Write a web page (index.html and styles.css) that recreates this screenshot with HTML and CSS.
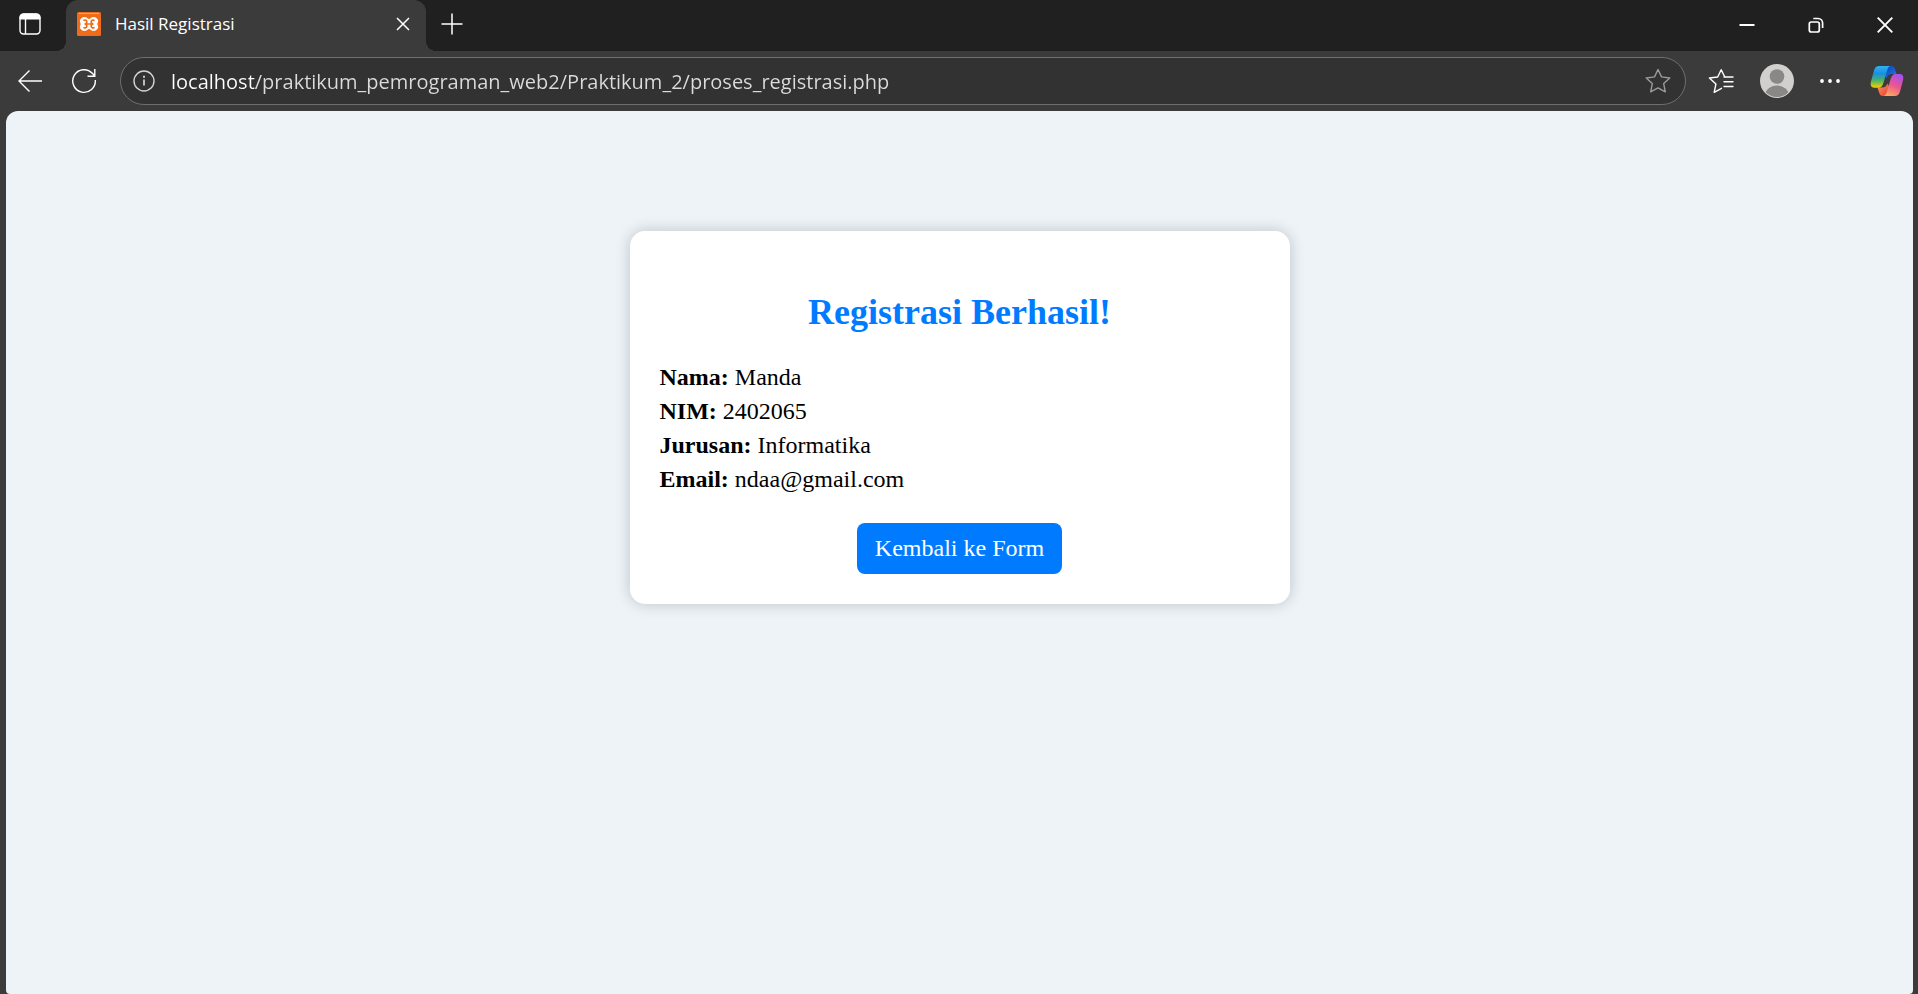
FILE: index.html
```html
<!DOCTYPE html>
<html lang="id">
<head>
<meta charset="utf-8">
<title>Hasil Registrasi</title>
<link rel="stylesheet" href="styles.css">
</head>
<body>
<div class="window">
  <header class="titlebar">
    <button class="tab-actions" type="button" aria-label="Tab actions">
      <svg width="24" height="24" viewBox="0 0 24 24" fill="none" stroke="#fff"><rect x="2" y="2" width="20" height="20" rx="3.5" stroke-width="1.4"/><path d="M2 7V5.5A3.5 3.5 0 0 1 5.500 2h13A3.500 3.500 0 0 1 22 5.500V7z" fill="#fff"/><path d="M7.500 7v15" stroke-width="1.400"/></svg>
    </button>
    <div class="tab">
      <svg class="favicon" width="24" height="24" viewBox="0 0 24 24"><rect width="24" height="24" rx="1.500" fill="#ef6c1a"/><path d="M2 1.500h20" stroke="#f7a56a" stroke-width="1"/><path d="M7.500 5.500c2.500 0 2.900 2 4.500 2s2-2 4.500-2c2.500 0 4.200 1.700 4.200 3.500 0 1.400-.9 2-.9 3s.9 1.600.9 3c0 1.800-1.700 3.500-4.200 3.500s-2.900-2-4.500-2-2 2-4.500 2c-2.500 0-4.200-1.700-4.200-3.500 0-1.400.9-2 .9-3s-.9-1.600-.9-3c0-1.800 1.700-3.500 4.200-3.500z" fill="#fff" stroke="#fff" stroke-width="1"/><path d="M6.500 8.700c1.200-1.100 3.200-.6 3.300 1 .1 1.400-.8 2.300-2.300 2.300 1.500 0 2.400.9 2.300 2.300-.1 1.600-2.100 2.100-3.300 1M17.500 8.700c-1.200-1.100-3.200-.6-3.300 1-.1 1.400.8 2.300 2.300 2.300-1.500 0-2.400.9-2.300 2.300.1 1.600 2.100 2.100 3.300 1M9.500 12h5" fill="none" stroke="#ef6c1a" stroke-width="1.700"/></svg>
      <span class="tab-title">Hasil Registrasi</span>
      <button type="button" class="tab-close" aria-label="Close tab">
        <svg width="14" height="14" viewBox="0 0 14 14" fill="none" stroke="#fff" stroke-width="1.500"><path d="M1 1l12 12M13 1L1 13"/></svg>
      </button>
    </div>
    <button type="button" class="new-tab" aria-label="New tab">
      <svg width="22" height="22" viewBox="0 0 22 22" fill="none" stroke="#fff" stroke-width="1.500"><path d="M11 .5v21M.5 11h21"/></svg>
    </button>
    <div class="window-controls">
      <button type="button" aria-label="Minimize"><svg width="16" height="16" viewBox="0 0 16 16" stroke="#fff" stroke-width="2"><path d="M.5 8h15"/></svg></button>
      <button type="button" aria-label="Restore"><svg width="16" height="16" viewBox="0 0 16 16" fill="none" stroke="#fff" stroke-width="1.700"><rect x="1.300" y="5" width="10" height="10" rx="2"/><path d="M5.300 1.500H10a4.600 4.600 0 0 1 4.600 4.600v5"/></svg></button>
      <button type="button" aria-label="Close"><svg width="16" height="16" viewBox="0 0 16 16" stroke="#fff" stroke-width="1.900"><path d="M.7.7l14.600 14.600M15.300.7L.7 15.300"/></svg></button>
    </div>
  </header>

  <nav class="toolbar">
    <button type="button" aria-label="Back"><svg width="24" height="24" viewBox="0 0 24 24" fill="none" stroke="#fff" stroke-width="1.400"><path d="M11.500 1.500L1 12l10.500 10.500M1 12h23"/></svg></button>
    <button type="button" aria-label="Refresh"><svg width="26" height="26" viewBox="0 0 26 26" fill="none" stroke="#fff" stroke-width="1.400"><path d="M24.300 12A11.300 11.300 0 1 1 21.300 5.300L23.800 8M23.800 1v7.300h-7.300"/></svg></button>
    <div class="address">
      <svg width="22" height="22" viewBox="0 0 22 22" fill="none" stroke="#d4d4d4" stroke-width="1.400"><circle cx="11" cy="11" r="10"/><path d="M11 9.500v6" stroke-width="1.700"/><path d="M11 5.700v2" stroke-width="1.900"/></svg>
      <input class="url" type="text" aria-label="Address" value="localhost/praktikum_pemrograman_web2/Praktikum_2/proses_registrasi.php">
      <button type="button" aria-label="Add to favorites"><svg width="26" height="26" viewBox="0 0 26 26" fill="none" stroke="#9b9b9b" stroke-width="1.400" stroke-linejoin="round"><path d="M13 1.500l3.500 7.400 8.300 1.100-6.100 5.600 1.600 8.200L13 19.900l-7.300 3.900 1.600-8.200L1.200 10l8.300-1.100z"/></svg></button>
    </div>
    <div class="tools">
      <button type="button" aria-label="Favorites"><svg width="26" height="26" viewBox="0 0 26 26" fill="none" stroke="#fff" stroke-width="1.400" stroke-linejoin="round" stroke-linecap="round"><path d="M13.500 20.300L6.200 24.300l1.700-8.300-6.500-6 8.300-1 3.500-7.300L16.800 9H18M16 9h9M16 13.700h9M16 18.500h9"/></svg></button>
      <button type="button" aria-label="Profile"><svg width="34" height="34" viewBox="0 0 34 34"><clipPath id="avatar"><circle cx="17" cy="17" r="16"/></clipPath><circle cx="17" cy="17" r="17" fill="#d2d0ce"/><g fill="#8a8886" clip-path="url(#avatar)"><circle cx="17" cy="12.500" r="7.300"/><ellipse cx="17" cy="32" rx="12" ry="10.500"/></g></svg></button>
      <button type="button" aria-label="Settings and more"><svg width="20" height="4" viewBox="0 0 20 4" fill="#fff"><circle cx="2" cy="2" r="1.900"/><circle cx="10" cy="2" r="1.900"/><circle cx="18" cy="2" r="1.900"/></svg></button>
      <button type="button" aria-label="Copilot"><svg width="34" height="32" viewBox="0 0 34 32">
        <defs>
          <linearGradient id="cool" x1="0" y1="0" x2="0" y2="1"><stop offset="0" stop-color="#2db4f5"/><stop offset=".35" stop-color="#1a8fe0"/><stop offset=".65" stop-color="#45b26b"/><stop offset="1" stop-color="#f6d000"/></linearGradient>
          <linearGradient id="blue" x1="0" y1="0" x2="1" y2="1"><stop offset="0" stop-color="#1138b5"/><stop offset="1" stop-color="#1c86f2"/></linearGradient>
          <linearGradient id="warm" x1=".7" y1="0" x2=".3" y2="1"><stop offset="0" stop-color="#a650ee"/><stop offset=".5" stop-color="#ec5590"/><stop offset="1" stop-color="#ffa95c"/></linearGradient>
          <linearGradient id="red" x1="0" y1="0" x2="1" y2="1"><stop offset="0" stop-color="#ff9a55"/><stop offset="1" stop-color="#e8383d"/></linearGradient>
        </defs>
        <path d="M17 1h4c2.500 0 3.400 1.600 4 3.700L26.500 9H22c-3 0-4.500 1.500-5.300 4L15 11z" fill="url(#blue)"/>
        <path d="M17 31h-4c-2.500 0-3.400-1.600-4-3.700L7.500 22.500H12c3 0 4.500-1.500 5.300-4L19 21z" fill="url(#red)"/>
        <path d="M9.500 1H21c-2 0-3 1.600-3.600 3.500l-4 13.500c-.9 3-2.300 4.700-5 4.700H4.500C1 22.700.1 20 1 16.500L4 5.500C4.900 2.400 6.500 1 9.500 1z" fill="url(#cool)"/>
        <path d="M24.500 31H13c2 0 3-1.600 3.600-3.500l4-13.500c.9-3 2.300-5 5-5h3.900c3.500 0 4.400 2.700 3.500 6.200L30 26.500c-.9 3.100-2.500 4.500-5.500 4.500z" fill="url(#warm)"/>
      </svg></button>
    </div>
  </nav>

  <main class="page">
    <section class="card">
      <h2>Registrasi Berhasil!</h2>
      <div class="details">
        <div><strong>Nama:</strong> Manda</div>
        <div><strong>NIM:</strong> 2402065</div>
        <div><strong>Jurusan:</strong> Informatika</div>
        <div><strong>Email:</strong> ndaa@gmail.com</div>
      </div>
      <a class="back-link" href="#">Kembali ke Form</a>
    </section>
  </main>
</div>
</body>
</html>
```
FILE: styles.css
```css
* { box-sizing: border-box; }
body { margin: 0; }
button {
  display: flex;
  align-items: center;
  justify-content: center;
  padding: 0;
  border: 0;
  background: none;
}
svg { display: block; flex: none; }

.window {
  display: flex;
  flex-direction: column;
  min-height: 100vh;
  background: #3b3b3b;
  font-family: "Open Sans", "Noto Sans", sans-serif;
}

.titlebar {
  display: flex;
  align-items: stretch;
  height: 51px;
  background: #202020;
}
.tab-actions { width: 60px; margin-right: 6px; padding-bottom: 3px; }
.tab {
  position: relative;
  display: flex;
  align-items: center;
  width: 360px;
  padding: 0 16px 3px 11px;
  border-radius: 12px 12px 0 0;
  background: #3b3b3b;
}
.tab::before,
.tab::after {
  content: "";
  position: absolute;
  bottom: 0;
  width: 10px;
  height: 10px;
}
.tab::before { right: 100%; background: radial-gradient(circle at 0 0, #202020 10px, #3b3b3b 10px); }
.tab::after { left: 100%; background: radial-gradient(circle at 100% 0, #202020 10px, #3b3b3b 10px); }
.tab-title {
  flex: 1;
  margin-left: 14px;
  color: #fff;
  font-size: 17px;
  line-height: 24px;
}
.new-tab { width: 52px; padding-bottom: 4px; }
.window-controls { display: flex; margin-left: auto; }
.window-controls button { width: 69px; padding: 0 0 2px 2px; }

.toolbar {
  display: flex;
  align-items: center;
  height: 60px;
  padding-right: 14px;
}
.toolbar > button { width: 54px; padding-left: 6px; }
.address {
  display: flex;
  flex: 1;
  align-items: center;
  height: 48px;
  margin-left: 12px;
  padding: 0 14px 0 12px;
  border: 1px solid #6e6e6e;
  border-radius: 24px;
  background: #323232;
}
.url {
  flex: 1;
  min-width: 0;
  height: 40px;
  margin: 0 16px;
  padding: 0;
  border: 0;
  outline: 0;
  background: linear-gradient(90deg, #fff 84px, #dcdcdc 84px);
  background-clip: text;
  color: transparent;
  font-family: inherit;
  font-size: 20px;
}
.tools { display: flex; align-items: center; gap: 26px; margin-left: 22px; }
.tools button:last-child { margin-left: 4px; }

.page {
  flex: 1;
  margin: 0 5px 0 6px;
  padding: 120px 24px;
  border-radius: 12px 12px 4px 4px;
  background: #edf3f7;
  color: #000;
  font-family: "Liberation Serif", "Times New Roman", serif;
  font-size: 24px;
}
.card {
  display: flex;
  flex-direction: column;
  max-width: 660px;
  margin: 0 auto;
  padding: 30px;
  border-radius: 15px;
  background: #fff;
  box-shadow: 0 0 15px rgba(0, 0, 0, 0.2);
}
.card h2 {
  margin: 30px 0 27px;
  color: #007bff;
  font-size: 36px;
  line-height: 42px;
  text-align: center;
}
.details { line-height: 34px; }
.back-link {
  align-self: center;
  margin-top: 27px;
  padding: 12px 18px;
  border-radius: 8px;
  background: #007bff;
  color: #fff;
  line-height: 27px;
  text-decoration: none;
}
```
